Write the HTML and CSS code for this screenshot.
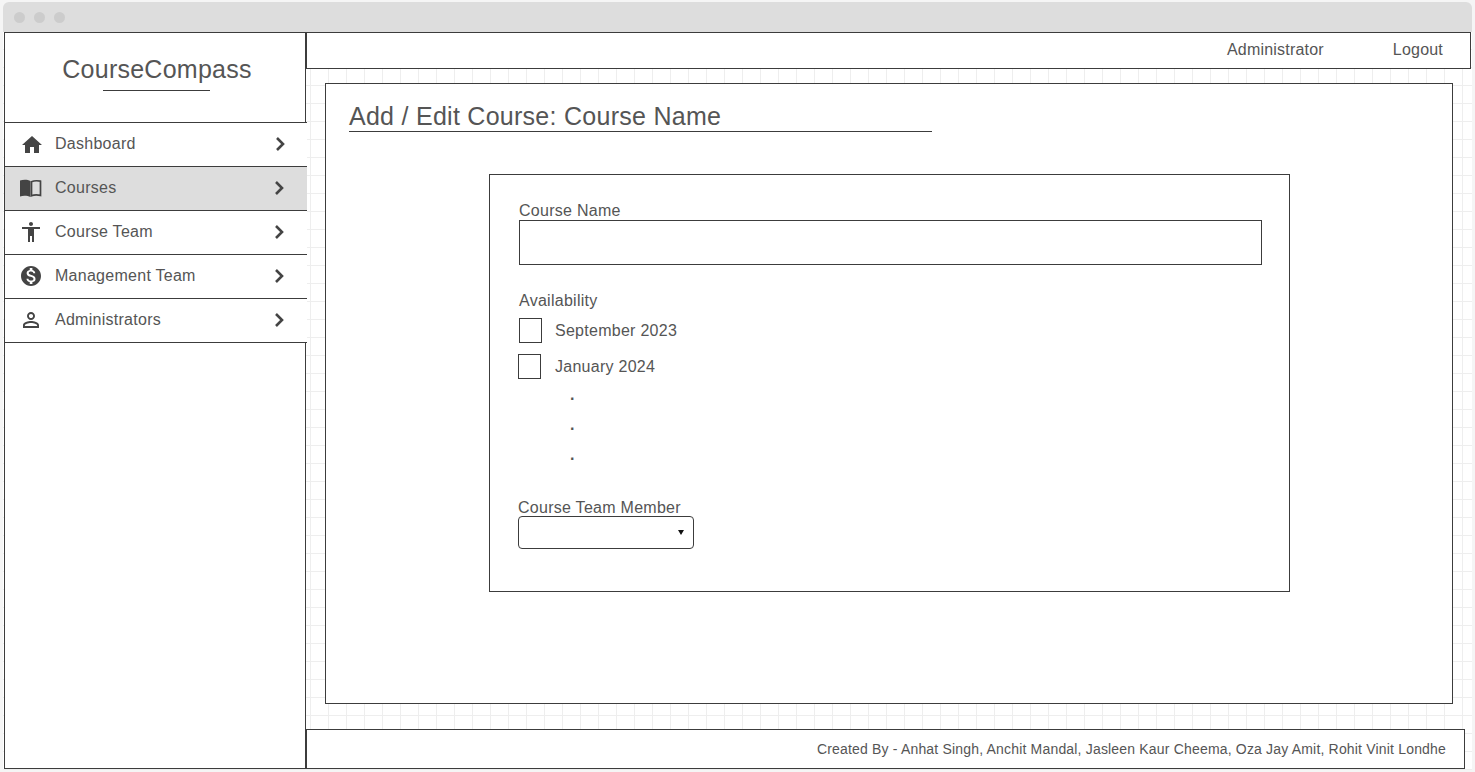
FILE: index.html
```html
<!DOCTYPE html>
<html lang="en">
<head>
    <meta charset="UTF-8">
    <title>CourseCompass</title>
    <link rel="stylesheet" href="styles.css">
</head>
<body>
    <div class="window">
        <div class="title-bar">
            <span class="dot"></span>
            <span class="dot"></span>
            <span class="dot"></span>
        </div>
        <div class="window-body">
            <aside class="sidebar">
                <div class="brand">
                    <h1>CourseCompass</h1>
                </div>
                <nav class="nav">
                    <a class="nav-item" href="#">
                        <svg class="nav-icon" viewBox="0 0 24 24"><path d="M10 20v-6h4v6h5v-8h3L12 3 2 12h3v8z"/></svg>
                        <span class="nav-label">Dashboard</span>
                        <svg class="chevron" viewBox="0 0 10 16"><path d="M2 2l6 6-6 6"/></svg>
                    </a>
                    <a class="nav-item active" href="#">
                        <svg class="nav-icon" viewBox="0 0 24 24"><path d="M1 4.500c3-1 7.500-1.200 10.500.6v15.900c-3-1.500-7.500-1.500-10.500-.6z"/><path class="book-page" d="M12.500 5.800v14c2.500-1 6-1 9-.4V5.200c-3-.6-6.500-.6-9 .6z"/></svg>
                        <span class="nav-label">Courses</span>
                        <svg class="chevron" viewBox="0 0 10 16"><path d="M2 2l6 6-6 6"/></svg>
                    </a>
                    <a class="nav-item" href="#">
                        <svg class="nav-icon" viewBox="0 0 24 24"><path d="M12 2c1.100 0 2 .9 2 2s-.9 2-2 2-2-.9-2-2 .9-2 2-2zm9 7h-6v13h-2v-6h-2v6H9V9H3V7h18v2z"/></svg>
                        <span class="nav-label">Course Team</span>
                        <svg class="chevron" viewBox="0 0 10 16"><path d="M2 2l6 6-6 6"/></svg>
                    </a>
                    <a class="nav-item" href="#">
                        <svg class="nav-icon" viewBox="0 0 24 24"><path d="M12 2C6.480 2 2 6.480 2 12s4.480 10 10 10 10-4.480 10-10S17.520 2 12 2zm1.410 16.090V20h-2.670v-1.930c-1.710-.36-3.160-1.460-3.270-3.400h1.960c.1 1.050.82 1.870 2.650 1.870 1.960 0 2.400-.98 2.400-1.590 0-.83-.44-1.610-2.670-2.140-2.480-.6-4.180-1.620-4.180-3.670 0-1.720 1.390-2.840 3.110-3.210V4h2.670v1.950c1.860.45 2.790 1.860 2.850 3.390H14.300c-.05-1.110-.64-1.870-2.220-1.870-1.500 0-2.400.68-2.400 1.640 0 .84.65 1.390 2.670 1.910s4.180 1.390 4.180 3.910c-.01 1.830-1.380 2.830-3.120 3.160z"/></svg>
                        <span class="nav-label">Management Team</span>
                        <svg class="chevron" viewBox="0 0 10 16"><path d="M2 2l6 6-6 6"/></svg>
                    </a>
                    <a class="nav-item" href="#">
                        <svg class="nav-icon" viewBox="0 0 24 24"><path d="M12 5.900c1.160 0 2.100.94 2.100 2.100s-.94 2.100-2.100 2.100S9.900 9.160 9.900 8s.94-2.100 2.100-2.100m0 9c2.970 0 6.100 1.460 6.100 2.100v1.100H5.900V17c0-.64 3.130-2.100 6.100-2.100M12 4C9.790 4 8 5.790 8 8s1.790 4 4 4 4-1.790 4-4-1.790-4-4-4zm0 9c-2.670 0-8 1.340-8 4v3h16v-3c0-2.660-5.330-4-8-4z"/></svg>
                        <span class="nav-label">Administrators</span>
                        <svg class="chevron" viewBox="0 0 10 16"><path d="M2 2l6 6-6 6"/></svg>
                    </a>
                </nav>
            </aside>
            <div class="right">
                <header class="top-bar">
                    <span class="top-user">Administrator</span>
                    <a class="top-link" href="#">Logout</a>
                </header>
                <main class="main">
                    <section class="page">
                        <h2 class="page-title">Add / Edit Course: Course Name</h2>
                        <form class="course-form">
                            <label class="field-label" for="course-name">Course Name</label>
                            <input class="text-input" id="course-name" type="text">

                            <div class="field-label availability">Availability</div>
                            <label class="check-row">
                                <input class="check" type="checkbox">
                                <span>September 2023</span>
                            </label>
                            <label class="check-row second">
                                <input class="check" type="checkbox">
                                <span>January 2024</span>
                            </label>
                            <div class="more-dots">
                                <span>.</span>
                                <span>.</span>
                                <span>.</span>
                            </div>

                            <label class="field-label team-label" for="team-member">Course Team Member</label>
                            <div class="select-wrap">
                                <select id="team-member" class="select">
                                    <option value=""></option>
                                </select>
                            </div>
                        </form>
                    </section>
                </main>
                <footer class="footer">Created By - Anhat Singh, Anchit Mandal, Jasleen Kaur Cheema, Oza Jay Amit, Rohit Vinit Londhe</footer>
            </div>
        </div>
    </div>
</body>
</html>
```

FILE: styles.css
```css
* {
    box-sizing: border-box;
    margin: 0;
    padding: 0;
    font-family: "Liberation Sans", Arial, sans-serif;
}
body {
    background: #f5f5f5;
    height: 100vh;
    padding: 2px 3px;
    color: #555555;
    overflow: hidden;
}
.window {
    height: 100%;
    display: flex;
    flex-direction: column;
}
.title-bar {
    height: 30px;
    flex-shrink: 0;
    background: #dddddd;
    border-radius: 6px 6px 0 0;
    display: flex;
    align-items: center;
    gap: 9px;
    padding-left: 11px;
}
.dot {
    width: 11px;
    height: 11px;
    border-radius: 50%;
    background: #cccccc;
}
.window-body {
    flex: 1;
    display: flex;
    padding: 0 1px 0 1px;
    background-color: #ffffff;
    background-image:
        linear-gradient(#eeeeee 1px, transparent 1px),
        linear-gradient(90deg, #eeeeee 1px, transparent 1px);
    background-size: 18px 18px;
    background-position: 1px -1px;
}

/* sidebar */
.sidebar {
    width: 302px;
    flex-shrink: 0;
    margin-bottom: 1px;
    background: #ffffff;
    border: 1px solid #3c3c3c;
    display: flex;
    flex-direction: column;
}
.brand {
    height: 89px;
    text-align: center;
    padding-top: 21px;
    padding-left: 4px;
}
.brand h1 {
    display: inline-block;
    font-size: 25px;
    font-weight: normal;
    line-height: 30px;
    letter-spacing: 0.25px;
    padding-bottom: 7px;
}
.brand h1::after {
    content: "";
    display: block;
    width: 107px;
    margin: 6px 0 0 41px;
    border-bottom: 1px solid #3c3c3c;
}
.nav {
    margin-right: -2px;
}
.nav-item {
    height: 44px;
    border-top: 1px solid #3c3c3c;
    display: flex;
    align-items: center;
    padding-left: 14px;
    padding-right: 23px;
    color: #555555;
    text-decoration: none;
    background: #ffffff;
}
.nav-item:first-child {
    padding-right: 22px;
}
.nav-item:first-child .nav-icon {
    margin: 1px -1px 0 1px;
}
.nav-item:last-child {
    border-bottom: 1px solid #3c3c3c;
    height: 45px;
}
.nav-item.active {
    background: #dddddd;
}
.nav-icon {
    width: 24px;
    height: 24px;
    margin-bottom: 1px;
    fill: #444444;
    flex-shrink: 0;
}
.book-page {
    fill: none;
    stroke: #444444;
    stroke-width: 1.700;
}
.nav-label {
    flex: 1;
    margin-left: 12px;
    padding-bottom: 1px;
    font-size: 16px;
    letter-spacing: 0.27px;
}
.chevron {
    width: 10px;
    height: 16px;
    margin-bottom: 1px;
    fill: none;
    stroke: #444444;
    stroke-width: 2.600;
}

/* right side */
.right {
    flex: 1;
    display: flex;
    flex-direction: column;
    min-width: 0;
}
.top-bar {
    height: 37px;
    flex-shrink: 0;
    background: #ffffff;
    border: 1px solid #3c3c3c;
    display: flex;
    justify-content: flex-end;
    align-items: center;
    gap: 69px;
    padding-right: 27px;
    padding-bottom: 2px;
    font-size: 16px;
    letter-spacing: 0.2px;
}
.top-link {
    color: #555555;
    text-decoration: none;
}
.main {
    flex: 1;
    padding: 14px 18px 25px 19px;
    display: flex;
    min-height: 0;
}
.page {
    flex: 1;
    background: #ffffff;
    border: 1px solid #3c3c3c;
    padding: 18px 23px;
}
.page-title {
    width: 583px;
    font-size: 25px;
    font-weight: normal;
    line-height: 29px;
    letter-spacing: 0.27px;
    border-bottom: 1px solid #3c3c3c;
}
.course-form {
    width: 801px;
    height: 418px;
    margin: 42px 0 0 140px;
    background: #ffffff;
    border: 1px solid #3c3c3c;
    padding: 27px 27px 0 29px;
    display: flex;
    flex-direction: column;
    align-items: flex-start;
}
.field-label {
    font-size: 16px;
    line-height: 18px;
    letter-spacing: 0.27px;
}
.text-input {
    width: 743px;
    height: 45px;
    background: #ffffff;
    border: 1px solid #3c3c3c;
}
.availability {
    margin-top: 27px;
}
.check-row {
    display: flex;
    align-items: center;
    gap: 13px;
    margin-top: 8px;
    font-size: 16px;
    letter-spacing: 0.27px;
}
.check-row.second {
    margin-top: 11px;
    margin-left: -1px;
    gap: 14px;
}
.check {
    appearance: none;
    width: 23px;
    height: 25px;
    background: #ffffff;
    border: 1px solid #3c3c3c;
}
.more-dots {
    margin: 1px 0 0 51px;
    display: flex;
    flex-direction: column;
    font-size: 16px;
    font-weight: bold;
    line-height: 30px;
}
.team-label {
    margin-top: 29px;
    margin-left: -1px;
}
.select-wrap {
    width: 176px;
    height: 33px;
    margin: -1px 0 0 -1px;
    position: relative;
}
.select-wrap::after {
    content: "";
    position: absolute;
    right: 10px;
    top: 14px;
    border-left: 3px solid transparent;
    border-right: 3px solid transparent;
    border-top: 5px solid #111111;
}
.select {
    appearance: none;
    width: 100%;
    height: 100%;
    background: #ffffff;
    border: 1px solid #3c3c3c;
    border-radius: 4px;
}

.footer {
    height: 40px;
    flex-shrink: 0;
    margin-right: 6px;
    margin-bottom: 1px;
    background: #ffffff;
    border: 1px solid #3c3c3c;
    display: flex;
    justify-content: flex-end;
    align-items: center;
    padding-right: 18px;
    font-size: 14px;
    letter-spacing: 0.18px;
}
```
